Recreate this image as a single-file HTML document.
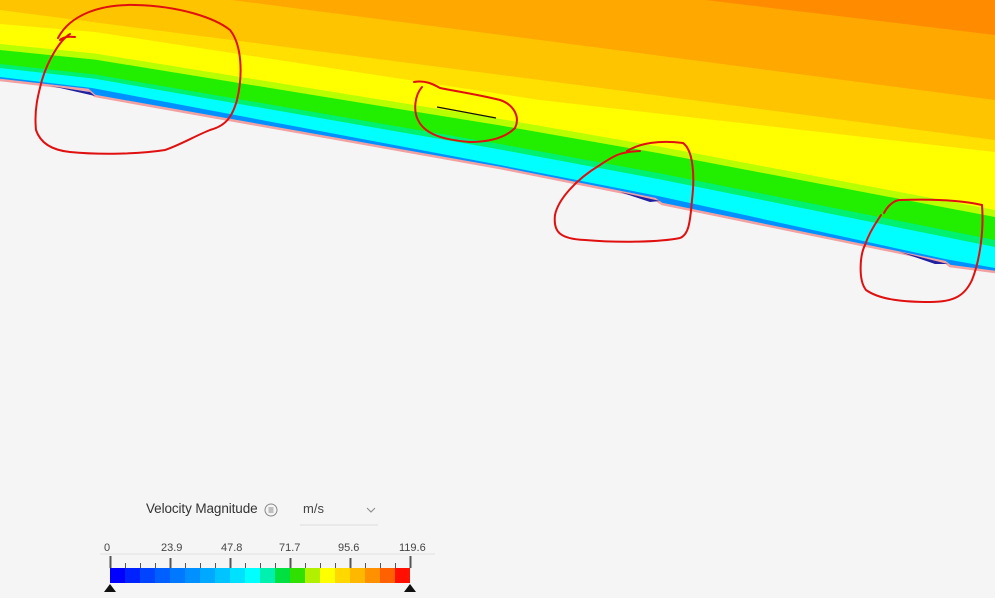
<!DOCTYPE html>
<html><head><meta charset="utf-8"><style>
html,body{margin:0;padding:0;background:#f5f5f5;width:995px;height:598px;overflow:hidden;font-family:"Liberation Sans",sans-serif}
.lg{position:absolute;color:#444}
</style></head><body>
<svg width="995" height="598" style="position:absolute;left:0;top:0">
<rect width="995" height="598" fill="#ff8c00"/>
<polygon fill="#ffa800" points="0,-100 540,-20 995,35 995,598 0,598"/>
<polygon fill="#ffc400" points="0,-30 540,40 995,100 995,598 0,598"/>
<polygon fill="#ffe000" points="0,10 540,80 995,140 995,598 0,598"/>
<polygon fill="#ffff00" points="0,24 95,32 540,100 995,152 995,598 0,598"/>
<polygon fill="#b8ff00" points="0,44 95,53.5 500,118.9 660,146.8 995,210 995,598 0,598"/>
<polygon fill="#22ee00" points="0,50 95,59.6 500,125.4 660,153.4 995,217 995,598 0,598"/>
<polygon fill="#00f070" points="0,64 95,74.5 500,144 660,173.4 995,240 995,598 0,598"/>
<polygon fill="#00ffff" points="0,68 95,78.8 500,149.5 660,179.4 995,247 995,598 0,598"/>
<polygon fill="#0090ff" points="0,77 92,88 500,165 658,196 945,259 995,268 995,598 0,598"/>
<polygon fill="#f5f5f5" points="0,80 88,90 95,96 500,168 655,199 662,204 945,262 950,266 995,272 995,598 0,598"/>
<polyline fill="none" stroke="#f2a0a0" stroke-width="2.5" points="0,80 88,90 95,96 500,168 655,199 662,204 945,262 950,266 995,272"/>
<path d="M50,86 L90,92 L95,96 L60,88Z M620,192 L660,201 L650,202Z M900,252 L948,264 L935,264Z" fill="#2020a0"/>
<g fill="none" stroke="#e01010" stroke-width="2" stroke-linecap="round">
<path d="M75,37 C66,36 62,38 60,40 M58,38 C70,15 100,4 135,5 C180,6 215,18 230,30 C242,45 243,75 237,100 C232,118 225,126 210,130 C195,136 180,145 165,150 C140,154 100,155 70,152 C50,150 40,142 36,130 C34,110 38,95 42,80 C48,60 60,40 70,34"/>
<path d="M414,82 C425,80 433,84 440,88 C460,92 480,95 500,100 C515,105 520,118 515,128 C505,138 490,142 470,142 C445,140 425,135 418,120 C413,110 415,95 422,87"/>
<path d="M627,151 C640,143 660,140 683,143 C693,150 695,175 692,200 C690,225 688,235 680,238 C660,242 620,243 585,240 C560,239 553,232 555,215 C558,200 575,180 600,165 C615,155 620,152 640,151"/>
<path d="M884,213 C888,205 895,200 900,200 C930,199 960,200 982,205 C984,230 980,260 972,280 C965,295 955,302 930,302 C905,302 880,300 866,290 C858,280 860,255 865,245 C870,230 878,220 881,215"/>
</g>
<line x1="437" y1="107" x2="496" y2="118" stroke="#111" stroke-width="1.2"/>
<line x1="300" y1="525" x2="378" y2="525" stroke="#ddd"/>
<line x1="100" y1="554" x2="435" y2="554" stroke="#e0e0e0"/>
<g stroke="#555" stroke-width="1">
<line x1="110.5" y1="556" x2="110.5" y2="568" stroke-width="2"/>
<line x1="170.5" y1="558" x2="170.5" y2="568" stroke-width="2"/>
<line x1="230.5" y1="558" x2="230.5" y2="568" stroke-width="2"/>
<line x1="290.5" y1="558" x2="290.5" y2="568" stroke-width="2"/>
<line x1="350.5" y1="558" x2="350.5" y2="568" stroke-width="2"/>
<line x1="410.5" y1="556" x2="410.5" y2="568" stroke-width="2"/>
<path d="M125.5,563V568M140.5,563V568M155.5,563V568M185.5,563V568M200.5,563V568M215.5,563V568M245.5,563V568M260.5,563V568M275.5,563V568M305.5,563V568M320.5,563V568M335.5,563V568M365.5,563V568M380.5,563V568M395.5,563V568"/>
</g>
<g>
<rect x="110" y="568" width="15" height="15" fill="#0000ff"/>
<rect x="125" y="568" width="15" height="15" fill="#0022ff"/>
<rect x="140" y="568" width="15" height="15" fill="#0044ff"/>
<rect x="155" y="568" width="15" height="15" fill="#0060ff"/>
<rect x="170" y="568" width="15" height="15" fill="#0078ff"/>
<rect x="185" y="568" width="15" height="15" fill="#0090ff"/>
<rect x="200" y="568" width="15" height="15" fill="#00a8ff"/>
<rect x="215" y="568" width="15" height="15" fill="#00c4ff"/>
<rect x="230" y="568" width="15" height="15" fill="#00e0ff"/>
<rect x="245" y="568" width="15" height="15" fill="#00ffff"/>
<rect x="260" y="568" width="15" height="15" fill="#00f0b0"/>
<rect x="275" y="568" width="15" height="15" fill="#00e040"/>
<rect x="290" y="568" width="15" height="15" fill="#30e000"/>
<rect x="305" y="568" width="15" height="15" fill="#b0f000"/>
<rect x="320" y="568" width="15" height="15" fill="#ffff00"/>
<rect x="335" y="568" width="15" height="15" fill="#ffd800"/>
<rect x="350" y="568" width="15" height="15" fill="#ffb800"/>
<rect x="365" y="568" width="15" height="15" fill="#ff9000"/>
<rect x="380" y="568" width="15" height="15" fill="#ff6000"/>
<rect x="395" y="568" width="15" height="15" fill="#ff1000"/>
</g>
<path d="M104,592 L110,584 L116,592Z M404,592 L410,584 L416,592Z" fill="#111"/>
<circle cx="271" cy="510" r="6" fill="none" stroke="#888"/>
<path d="M268.5,508h5M268.5,510h5M268.5,512h5" stroke="#666" stroke-width="0.8"/>
<path d="M367,508 L371,512 L375,508" fill="none" stroke="#888" stroke-width="1"/>
</svg>
<div class="lg" style="left:146px;top:501px;font-size:13.5px;color:#333;letter-spacing:-0.1px">Velocity Magnitude</div>
<div class="lg" style="left:303px;top:501px;font-size:13px">m/s</div>
<div class="lg" style="left:104px;top:542px;font-size:11px">0</div>
<div class="lg" style="left:161px;top:542px;font-size:11px">23.9</div>
<div class="lg" style="left:221px;top:542px;font-size:11px">47.8</div>
<div class="lg" style="left:279px;top:542px;font-size:11px">71.7</div>
<div class="lg" style="left:338px;top:542px;font-size:11px">95.6</div>
<div class="lg" style="left:399px;top:542px;font-size:11px">119.6</div>
</body></html>
